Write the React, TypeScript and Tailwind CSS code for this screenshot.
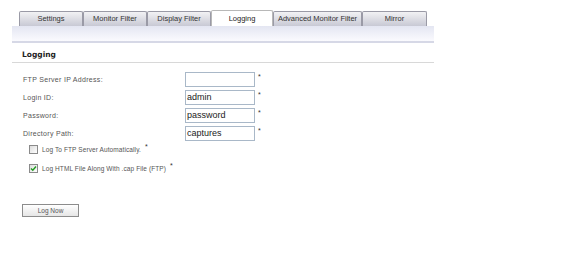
import React from 'react';

const tabs = [
  { label: 'Settings', w: 'w-[64px]' },
  { label: 'Monitor Filter', w: 'w-[64px]' },
  { label: 'Display Filter', w: 'w-[64px]' },
  { label: 'Logging', w: 'w-[62px]', active: true },
  { label: 'Advanced Monitor Filter', w: 'w-[89px]' },
  { label: 'Mirror', w: 'w-[65px]' },
];

const fields = [
  { label: 'FTP Server IP Address:', value: '' },
  { label: 'Login ID:', value: 'admin' },
  { label: 'Password:', value: 'password' },
  { label: 'Directory Path:', value: 'captures' },
];

const App = () => {
  return (
    <div className="w-[576px] h-[255px] bg-white font-['Liberation_Sans',sans-serif] text-[7px] text-[#555]">
      {/* tab strip */}
      <div className="flex items-end pl-[19px] pt-[10px] h-[26px]">
        {tabs.map((t) => (
          <div
            key={t.label}
            className={`${t.w} flex items-center justify-center whitespace-nowrap border border-b-0 rounded-t-[2px] text-[7.5px] ${
              t.active
                ? 'h-[16px] bg-white border-[#b8b8b8] text-[#222]'
                : 'h-[15px] bg-gradient-to-b from-[#f2f2f4] to-[#c8c9d4] border-[#9a9aa6] text-[#333]'
            }`}
          >
            {t.label}
          </div>
        ))}
      </div>

      {/* band */}
      <div className="ml-[12px] w-[422px] h-[17px] bg-gradient-to-b from-[#e4e6f2] to-[#fafafe] border-b-2 border-[#d6d8e6]" />

      {/* section heading */}
      <div className="ml-[12px] w-[422px] mt-[6px] pl-[10px] pb-[2px] border-b border-[#d8d8d8] font-['DejaVu_Sans',sans-serif] font-bold text-[7.5px] text-[#222]">
        Logging
      </div>

      {/* form rows */}
      <div className="flex flex-col gap-[3px] mt-[9px] pl-[23px]">
        {fields.map((f) => (
          <div key={f.label} className="flex items-center h-[15px]">
            <span className="w-[162px] text-[7px] tracking-[0.3px]">{f.label}</span>
            <div className="w-[70px] h-[15px] border border-[#a9b8c8] bg-white flex items-center pl-[1px] font-['Liberation_Sans',sans-serif] text-[9px] text-[#222]">
              {f.value}
            </div>
            <span className="ml-[3px] -mt-[5px] text-[7px] text-[#333]">*</span>
          </div>
        ))}
      </div>

      {/* checkboxes */}
      <div className="flex flex-col gap-[8px] mt-[3px] pl-[29px]">
        <div className="flex items-center gap-[4px] h-[11px]">
          <span className="w-[9px] h-[9px] border border-[#8a8a8a] bg-gradient-to-br from-[#dcdcdc] to-white" />
          <span className="text-[6.5px] tracking-[0.1px]">Log To FTP Server Automatically.</span>
          <span className="-mt-[6px] text-[7px] text-[#333]">*</span>
        </div>
        <div className="flex items-center gap-[4px] h-[11px]">
          <span className="w-[9px] h-[9px] border border-[#8a8a8a] bg-gradient-to-br from-[#dcdcdc] to-white flex items-center justify-center">
            <svg width="7" height="7" viewBox="0 0 7 7">
              <path d="M1 3.5 L2.8 5.3 L6 1.5" stroke="#1f9a1f" strokeWidth="1.4" fill="none" />
            </svg>
          </span>
          <span className="text-[6.5px] tracking-[0.1px]">Log HTML File Along With .cap File (FTP)</span>
          <span className="-mt-[6px] text-[7px] text-[#333]">*</span>
        </div>
      </div>

      {/* button */}
      <div className="pl-[22px] mt-[30px]">
        <div className="w-[57px] h-[13px] border border-[#8c8c8c] bg-gradient-to-b from-white to-[#e6e6e6] flex items-center justify-center text-[6.5px]">
          Log Now
        </div>
      </div>
    </div>
  );
};

export default App;
